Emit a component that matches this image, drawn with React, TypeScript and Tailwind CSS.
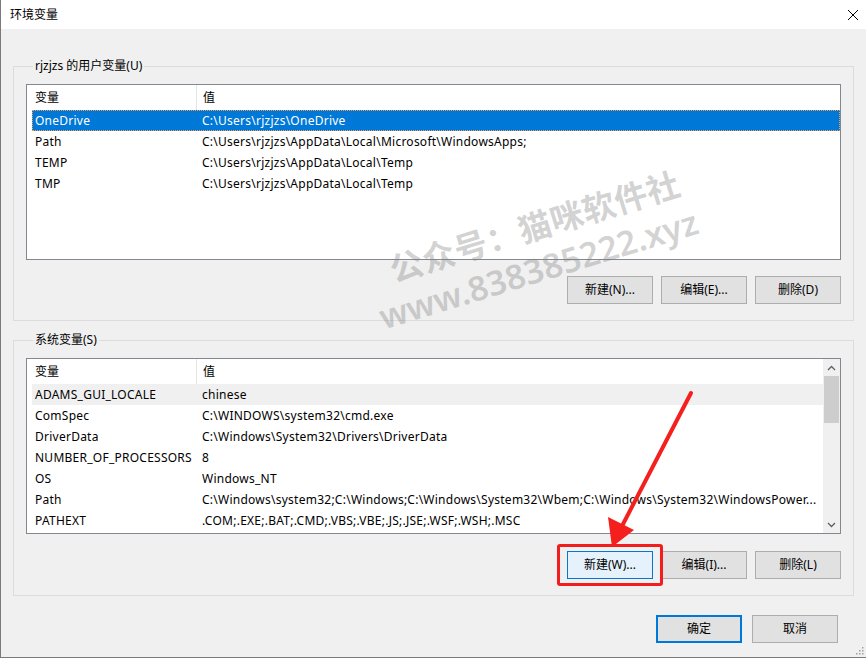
import React from 'react';

const userVars = [
  ['OneDrive', 'C:\\Users\\rjzjzs\\OneDrive'],
  ['Path', 'C:\\Users\\rjzjzs\\AppData\\Local\\Microsoft\\WindowsApps;'],
  ['TEMP', 'C:\\Users\\rjzjzs\\AppData\\Local\\Temp'],
  ['TMP', 'C:\\Users\\rjzjzs\\AppData\\Local\\Temp'],
];

const sysVars = [
  ['ADAMS_GUI_LOCALE', 'chinese'],
  ['ComSpec', 'C:\\WINDOWS\\system32\\cmd.exe'],
  ['DriverData', 'C:\\Windows\\System32\\Drivers\\DriverData'],
  ['NUMBER_OF_PROCESSORS', '8'],
  ['OS', 'Windows_NT'],
  ['Path', 'C:\\Windows\\system32;C:\\Windows;C:\\Windows\\System32\\Wbem;C:\\Windows\\System32\\WindowsPower...'],
  ['PATHEXT', '.COM;.EXE;.BAT;.CMD;.VBS;.VBE;.JS;.JSE;.WSF;.WSH;.MSC'],
];

function Btn({ label, variant }: { label: string; variant?: 'hot' | 'default' }) {
  const cls =
    variant === 'hot'
      ? 'border-[#0078d7] bg-[#e5f1fb]'
      : variant === 'default'
        ? 'border-2 border-[#0078d7] bg-[#e1e1e1]'
        : 'border-[#adadad] bg-[#e1e1e1]';
  return (
    <div className={`flex h-[28px] w-[86px] items-center justify-center border text-[12px] text-black ${cls}`}>
      {label}
    </div>
  );
}

function VarList({
  rows,
  selected,
  inactive,
  scroll,
}: {
  rows: string[][];
  selected?: number;
  inactive?: number;
  scroll?: boolean;
}) {
  return (
    <div className="flex h-[176px] border border-[#828790] bg-white">
      <div className="flex-1 overflow-hidden pl-[5px]">
        <div className="flex h-[25px] items-center text-[12px]">
          <div className="w-[164px] pl-[3px]">变量</div>
          <div className="h-full w-px bg-[#e5e5e5]" />
          <div className="pl-[6px]">值</div>
        </div>
        {rows.map((r, i) => (
          <div
            key={i}
            className={`flex h-[21px] items-center whitespace-nowrap text-[12px] tracking-[0.25px] ${
              i === selected
                ? 'bg-[#0078d7] text-white outline-1 outline-dotted outline-offset-[-1px] outline-[#f0a050]'
                : i === inactive
                  ? 'bg-[#f0f0f0]'
                  : ''
            }`}
          >
            <div className="w-[165px] shrink-0 pl-[3px]">{r[0]}</div>
            <div className="pl-[5px]">{r[1]}</div>
          </div>
        ))}
      </div>
      {scroll && (
        <div className="flex w-[17px] flex-col items-center bg-[#f0f0f0]">
          <div className="flex h-[17px] items-center justify-center">
            <svg width="9" height="6" viewBox="0 0 9 6">
              <path d="M1 5 L4.5 1.5 L8 5" fill="none" stroke="#606060" strokeWidth="1.3" />
            </svg>
          </div>
          <div className="h-[47px] w-[15px] bg-[#cdcdcd]" />
          <div className="flex-1" />
          <div className="flex h-[17px] items-center justify-center">
            <svg width="9" height="6" viewBox="0 0 9 6">
              <path d="M1 1 L4.5 4.5 L8 1" fill="none" stroke="#606060" strokeWidth="1.3" />
            </svg>
          </div>
        </div>
      )}
    </div>
  );
}

export default function App() {
  return (
    <div
      className="relative h-[658px] w-[866px] overflow-hidden border-b border-l border-[#7a7a7a] bg-[#f0f0f0] text-black"
      style={{ fontFamily: '"Noto Sans", "Noto Sans CJK SC", sans-serif' }}
    >
      <div className="flex h-[29px] items-center justify-between bg-white pl-[9px] pr-[5px] text-[12px]">
        <span>环境变量</span>
        <svg width="12" height="12" viewBox="0 0 12 12" className="mr-[2px]">
          <path d="M1 1 L11 11 M11 1 L1 11" stroke="#000" strokeWidth="1" />
        </svg>
      </div>

      <fieldset className="mx-[12px] mt-[29px] border border-[#dcdcdc] px-[12px] pb-[16px] pt-[10px]">
        <legend className="ml-[7px] px-[2px] text-[12px] leading-[16px]">rjzjzs 的用户变量(U)</legend>
        <VarList rows={userVars} selected={0} />
        <div className="mt-[16px] flex justify-end gap-[8px]">
          <Btn label="新建(N)..." />
          <Btn label="编辑(E)..." />
          <Btn label="删除(D)" />
        </div>
      </fieldset>

      <fieldset className="mx-[12px] mt-[11px] border border-[#dcdcdc] px-[12px] pb-[16px] pt-[10px]">
        <legend className="ml-[7px] px-[2px] text-[12px] leading-[16px]">系统变量(S)</legend>
        <VarList rows={sysVars} inactive={0} scroll />
        <div className="mt-[17px] flex justify-end gap-[8px]">
          <div className="relative">
            <Btn label="新建(W)..." variant="hot" />
            <div className="pointer-events-none absolute -inset-x-[10px] -inset-y-[7px] rounded-[3px] border-[3px] border-[#f21e1e]" />
          </div>
          <Btn label="编辑(I)..." />
          <Btn label="删除(L)" />
        </div>
      </fieldset>

      <div className="mr-[28px] mt-[19px] flex justify-end gap-[10px]">
        <Btn label="确定" variant="default" />
        <Btn label="取消" />
      </div>

      <div className="pointer-events-none absolute left-[361px] top-[259px] origin-top-left -rotate-[17deg] select-none whitespace-nowrap font-semibold text-[#808080]/35">
        <div className="pl-[24px] text-[33px] leading-[40px] tracking-[0.5px]">公众号：猫咪软件社</div>
        <div className="text-[34px] leading-[42px]">www.838385222.xyz</div>
      </div>

      <svg className="pointer-events-none absolute left-0 top-0" width="866" height="658">
        <line x1="690" y1="393" x2="620" y2="528" stroke="#f5201e" strokeWidth="4" strokeLinecap="round" />
        <polygon points="611,547 607,517 633,530" fill="#f5201e" />
      </svg>

      <div className="absolute bottom-[2px] right-[2px]">
        <svg width="10" height="10" viewBox="0 0 10 10">
          {[
            [8, 2],
            [8, 5],
            [5, 5],
            [8, 8],
            [5, 8],
            [2, 8],
          ].map(([x, y], i) => (
            <rect key={i} x={x} y={y} width="1.5" height="1.5" fill="#a0a0a0" />
          ))}
        </svg>
      </div>
    </div>
  );
}
